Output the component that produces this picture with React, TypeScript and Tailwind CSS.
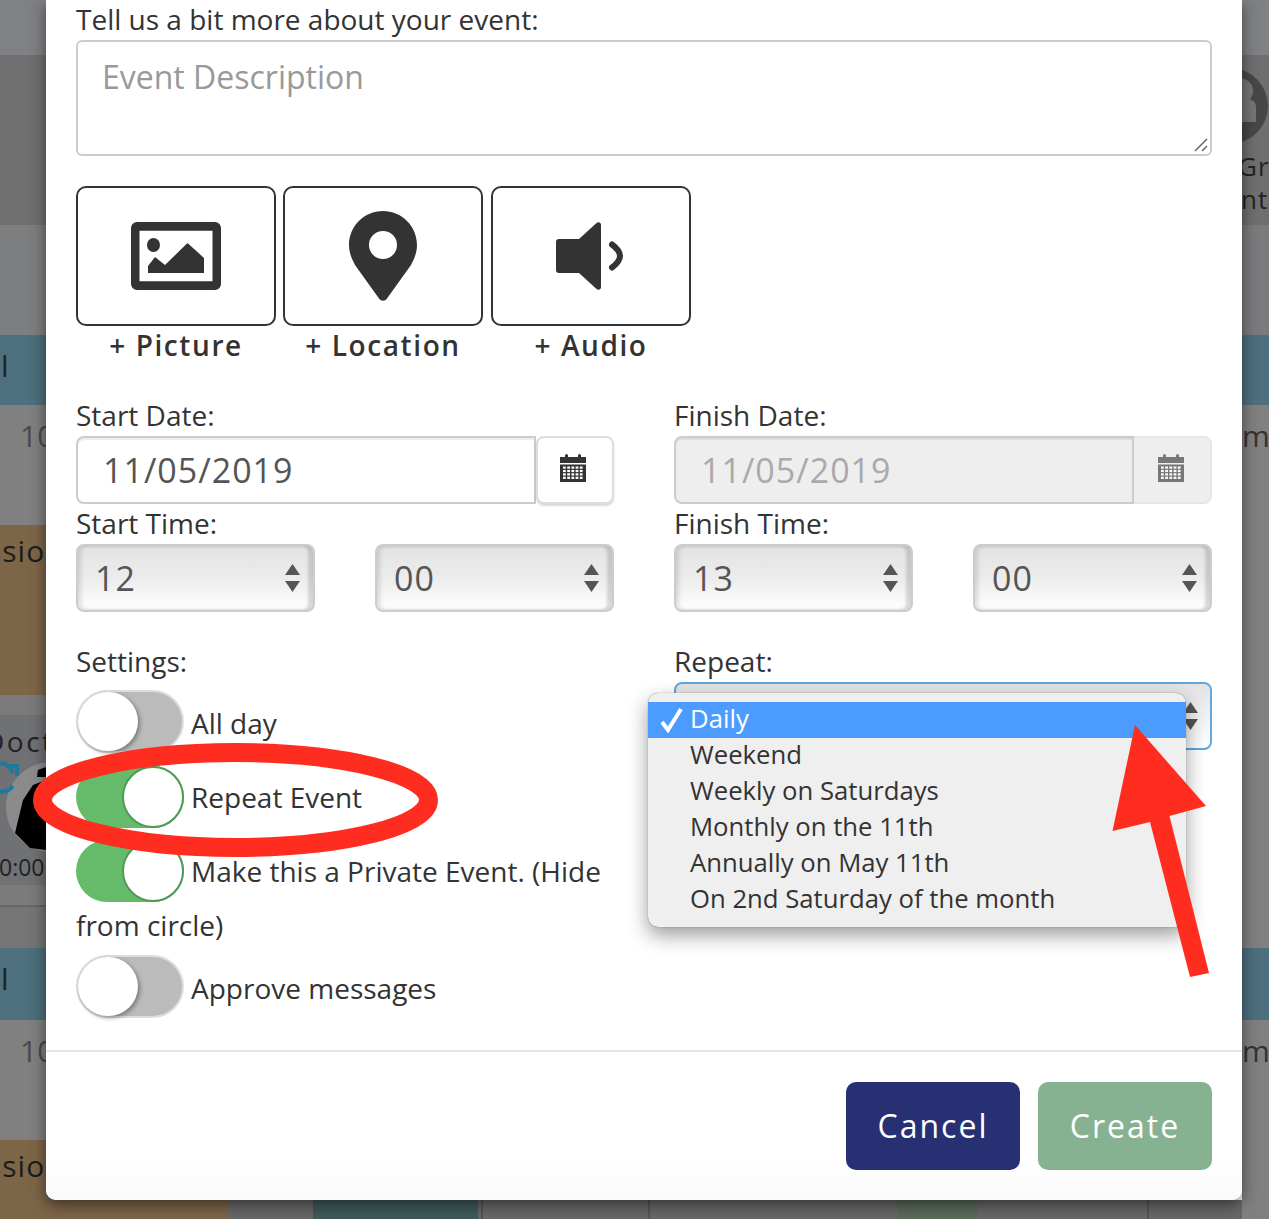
import type { ReactNode } from "react";

const REPEAT_OPTIONS = [
  "Daily",
  "Weekend",
  "Weekly on Saturdays",
  "Monthly on the 11th",
  "Annually on May 11th",
  "On 2nd Saturday of the month",
];

function PictureIcon() {
  return (
    <svg width="90" height="68" viewBox="0 0 90 68" fill="#333">
      <path
        fillRule="evenodd"
        d="M6 0H84A6 6 0 0 1 90 6V62A6 6 0 0 1 84 68H6A6 6 0 0 1 0 62V6A6 6 0 0 1 6 0ZM8.5 8.7V59.3H81.5V8.7Z"
      />
      <ellipse cx="22.5" cy="23" rx="6.5" ry="7" />
      <path d="M17 51V44L24 35L34 43L56.5 21L73 36V51Z" />
    </svg>
  );
}

function PinIcon() {
  return (
    <svg width="68" height="90" viewBox="0 0 68 90" fill="#333">
      <path
        fillRule="evenodd"
        d="M34 0C52.8 0 68 15.2 68 34c0 8-3 14-6 20L38 87.5c-2 3-6 3-8 0L6 54c-3-6-6-12-6-20C0 15.2 15.2 0 34 0ZM34 20a14 14 0 1 0 0 28a14 14 0 1 0 0-28Z"
      />
    </svg>
  );
}

function AudioIcon() {
  return (
    <svg className="mr-[2px]" width="68" height="68" viewBox="0 0 68 68" fill="#333">
      <path d="M3 17H23L40 1.5C42-.5 45 0 45 3V65C45 68 42 68.5 40 66.5L23 51H3C1 51 0 50 0 48V20C0 18 1 17 3 17Z" />
      <path
        d="M56 22.5c4 3 8 7 8 11.5s-4 8.5-8 11.5"
        fill="none"
        stroke="#333"
        strokeWidth="6"
        strokeLinecap="round"
      />
    </svg>
  );
}

function CalendarIcon({ color }: { color: string }) {
  const dots: ReactNode[] = [];
  for (let row = 0; row < 4; row++) {
    for (let col = 0; col < 5; col++) {
      dots.push(
        <rect
          key={`${row}-${col}`}
          x={3 + col * 4.2}
          y={12.5 + row * 3.4}
          width="2.8"
          height="2.2"
          fill="#fff"
        />,
      );
    }
  }
  return (
    <svg width="26" height="28" viewBox="0 0 26 28" fill={color}>
      <path d="M0 3H5V1.5A1.5 1.5 0 0 1 8 1.5V3H18V1.5A1.5 1.5 0 0 1 21 1.5V3H26V9H0Z" />
      <rect x="0" y="10.5" width="26" height="17.5" />
      {dots}
    </svg>
  );
}

function SelectArrows() {
  return (
    <svg width="15" height="28" viewBox="0 0 15 28" fill="#555">
      <path d="M7.5 0L15 11H0Z" />
      <path d="M7.5 28L15 17H0Z" />
    </svg>
  );
}

function TimeSelect({ value }: { value: string }) {
  return (
    <div className="flex h-[68px] items-center justify-between rounded-[8px] border-2 border-[#ccc] bg-gradient-to-b from-[#e3e3e3] via-[#ececec] to-white pl-[17px] pr-[13px] text-[34px] tracking-[1px] text-[#555] shadow-[inset_3px_0_4px_rgba(0,0,0,0.12),inset_-5px_0_3px_rgba(0,0,0,0.14)]">
      <span>{value}</span>
      <SelectArrows />
    </div>
  );
}

function DateInput({ disabled }: { disabled?: boolean }) {
  return (
    <div className="flex h-[68px]">
      <div
        className={
          disabled
            ? "flex flex-1 items-center rounded-l-[8px] border-2 border-[#ccc] bg-[#eee] pl-[25px] text-[34px] tracking-[1px] text-[#aaa] shadow-[inset_0_2px_1px_rgba(0,0,0,0.08)]"
            : "flex flex-1 items-center rounded-l-[8px] border-2 border-[#ccc] bg-white pl-[25px] text-[34px] tracking-[1px] text-[#555] shadow-[inset_0_2px_1px_rgba(0,0,0,0.08)]"
        }
      >
        11/05/2019
      </div>
      <div
        className={
          disabled
            ? "flex w-[78px] items-center justify-center rounded-r-[8px] border-2 border-l-0 border-[#e6e6e6] bg-[#eee] pb-[5px] pr-[3px]"
            : "flex w-[78px] items-center justify-center rounded-[8px] border-2 border-[#ddd] bg-white pb-[5px] pr-[5px] shadow-[0_2px_2px_rgba(0,0,0,0.15)]"
        }
      >
        <CalendarIcon color={disabled ? "#777" : "#333"} />
      </div>
    </div>
  );
}

function Toggle({ on }: { on?: boolean }) {
  return (
    <div
      className={
        on
          ? "flex h-[62px] w-[108px] shrink-0 justify-end rounded-full bg-[#66bb6a]"
          : "flex h-[63px] w-[108px] shrink-0 justify-start rounded-full border-2 border-[#ddd] bg-[#bbb]"
      }
    >
      <div
        className={
          on
            ? "h-[62px] w-[62px] rounded-full border-2 border-[#4f9a55] bg-white"
            : "h-[59px] w-[60px] rounded-full bg-white shadow-[2px_2px_4px_rgba(0,0,0,0.35)]"
        }
      />
    </div>
  );
}

function SettingRow({
  on,
  label,
  className,
}: {
  on?: boolean;
  label: string;
  className?: string;
}) {
  return (
    <div className={`flex items-center gap-[7px] ${className ?? ""}`}>
      <Toggle on={on} />
      <span className={on ? "" : "pt-[3px]"}>{label}</span>
    </div>
  );
}

function AttachButton({
  label,
  className,
  children,
}: {
  label: string;
  className?: string;
  children: ReactNode;
}) {
  return (
    <div className={`w-[200px] ${className ?? ""}`}>
      <div className="flex h-[140px] items-center justify-center rounded-[10px] border-2 border-[#333]">
        {children}
      </div>
      <div className="flex h-[40px] items-center justify-center pb-[2px] font-semibold tracking-[1.6px]">
        {label}
      </div>
    </div>
  );
}

function FieldLabel({ children }: { children: ReactNode }) {
  return <div className="flex h-[40px] items-center pb-[2px]">{children}</div>;
}

function DoctorCell() {
  return (
    <div className="relative h-[170px] overflow-hidden bg-[#6f7174]">
      <span className="-ml-[16px] mt-[5px] block text-[28px] tracking-[2.5px] text-[#222]">Doct</span>
      <div className="absolute left-[6px] top-[47px] h-[90px] w-[90px] rounded-full bg-[#8b8b8b]" />
      <svg className="absolute left-0 top-0" width="60" height="140" viewBox="0 0 60 140">
        <path d="M23 85L15 118L30 133L46 135V65L33 70Z" fill="#000" />
        <path d="M38 55L46 52V62H37Z" fill="#000" />
        <g fill="none" stroke="#1b7a9e" strokeWidth="4">
          <path d="M-2 49C4 47 10 50 13 58" />
          <path d="M-2 76C4 78 9 76 13 71" />
          <path d="M6 51H17V61" />
        </g>
      </svg>
      <span className="absolute -left-[1px] top-[135px] text-[23px] text-[#222]">0:00</span>
    </div>
  );
}

function Backdrop() {
  return (
    <div className="flex h-[1219px] w-full text-[30px] text-[#333]">
      <div className="flex w-[228px] shrink-0 flex-col">
        <div className="h-[55px] bg-[#7f8184]" />
        <div className="h-[170px] bg-[#707070]" />
        <div className="h-[110px] bg-[#7d7e80]" />
        <div className="h-[70px] bg-[#4e6f7d] pt-[8px] text-[#222]">
          <span className="-ml-[17px] block">ol</span>
        </div>
        <div className="h-[120px] bg-[#808080] pl-[20px] pt-[8px] text-[#4a4a4a]">10</div>
        <div className="h-[170px] bg-[#7d6548] pt-[3px] tracking-[1px] text-[#1c1c1c]">
          <span className="-ml-[13px] block">ssio</span>
        </div>
        <div className="h-[20px] bg-[#7a7a7a]" />
        <DoctorCell />
        <div className="h-[20px] bg-[#7b7b7b]" />
        <div className="h-[43px] border-t-2 border-[#666] bg-[#757575]" />
        <div className="h-[72px] bg-[#4e6f7d] pt-[8px] text-[#222]">
          <span className="-ml-[17px] block">ol</span>
        </div>
        <div className="h-[120px] bg-[#808080] pl-[20px] pt-[8px] text-[#4a4a4a]">10</div>
        <div className="flex-1 bg-[#7d6548] pt-[3px] tracking-[1px] text-[#1c1c1c]">
          <span className="-ml-[13px] block">ssio</span>
        </div>
      </div>
      <div className="flex flex-1 flex-col justify-end">
        <div className="flex h-[19px] bg-[#686868]">
          <div className="w-[85px]" />
          <div className="w-[165px] bg-[#3f5a5c]" />
          <div className="w-[3px]" />
          <div className="w-[167px] border-l-[2px] border-[#555]" />
          <div className="w-[166px] border-l-[2px] border-[#555]" />
          <div className="w-[83px]" />
          <div className="w-[80px] bg-[#5c6a5a]" />
          <div className="w-[170px]" />
          <div className="flex-1 border-l-[2px] border-[#555]" />
        </div>
      </div>
      <div className="flex w-[27px] shrink-0 flex-col">
        <div className="h-[55px] bg-[#7f8184]" />
        <div className="relative h-[170px] overflow-hidden bg-[#6f6f6f] pt-[95px] text-[26px] leading-[33px] tracking-[1px] text-[#222]">
          <div className="absolute -left-[50px] top-[13px] h-[76px] w-[76px] rounded-full bg-[#474747]" />
          <div className="absolute -left-[15px] top-[23px] h-[26px] w-[26px] rounded-full bg-[#757575]" />
          <div className="absolute -left-[15px] top-[44px] h-[23px] w-[29px] rounded-t-[8px] bg-[#757575]" />
          <div className="relative -ml-[4px]">Gre</div>
          <div className="relative -ml-[1px]">nt</div>
        </div>
        <div className="h-[110px] bg-[#7a7b7d]" />
        <div className="h-[70px] bg-[#4e6f7d]" />
        <div className="h-[543px] bg-[#808080] pt-[8px] text-[#333]">m</div>
        <div className="h-[72px] bg-[#4e6f7d]" />
        <div className="flex-1 bg-[#808080] pt-[8px] text-[#333]">m</div>
      </div>
    </div>
  );
}

function RepeatMenu() {
  return (
    <div className="absolute -left-[26px] top-[11px] z-10 w-[538px] rounded-[10px] bg-[#efefef] py-[9px] text-[25.7px] leading-[36px] text-[#333] shadow-[0_8px_20px_rgba(0,0,0,0.4),0_0_1px_rgba(0,0,0,0.6)]">
      {REPEAT_OPTIONS.map((option, i) => (
        <div
          key={option}
          className={
            i === 0
              ? "flex h-[36px] items-center bg-[#4c9bff] pb-[2px] pl-[42px] text-white"
              : "flex h-[36px] items-center pb-[2px] pl-[42px]"
          }
        >
          {option}
        </div>
      ))}
      <svg
        className="absolute left-[12px] top-[14px]"
        width="24"
        height="26"
        viewBox="0 0 24 26"
        fill="none"
        stroke="#fff"
        strokeWidth="4"
      >
        <path d="M2 15L8 23L21 2" />
      </svg>
    </div>
  );
}

export default function App() {
  return (
    <div className="relative h-[1219px] w-full overflow-hidden font-['Open_Sans',sans-serif] text-[28px] text-[#333]">
      <Backdrop />

      <div className="absolute left-[46px] top-0 w-[1196px] rounded-b-[10px] bg-white shadow-[0_5px_15px_rgba(0,0,0,0.5)]">
        <div className="px-[30px]">
          <FieldLabel>Tell us a bit more about your event:</FieldLabel>
          <div className="relative h-[116px] rounded-[6px] border-2 border-[#ccc] pl-[24px] pt-[11px] text-[32px] text-[#999]">
            Event Description
            <svg
              className="absolute bottom-[1px] right-[1px]"
              width="16"
              height="16"
              viewBox="0 0 16 16"
              stroke="#666"
              strokeWidth="1.5"
            >
              <path d="M2 14L14 2M9 14L14 9" />
            </svg>
          </div>

          <div className="mt-[30px] flex gap-[7px]">
            <AttachButton label="+ Picture">
              <PictureIcon />
            </AttachButton>
            <AttachButton label="+ Location">
              <PinIcon />
            </AttachButton>
            <AttachButton label="+ Audio" className="ml-[1px]">
              <AudioIcon />
            </AttachButton>
          </div>

          <div className="mt-[30px] grid grid-cols-[538px_538px] gap-x-[60px]">
            <div>
              <FieldLabel>Start Date:</FieldLabel>
              <DateInput />
              <FieldLabel>Start Time:</FieldLabel>
              <div className="grid grid-cols-[239px_239px] gap-x-[60px]">
                <TimeSelect value="12" />
                <TimeSelect value="00" />
              </div>
              <div className="mt-[30px]">
                <FieldLabel>Settings:</FieldLabel>
                <SettingRow label="All day" className="mt-[8px]" />
                <SettingRow on label="Repeat Event" className="mt-[13px]" />
                <SettingRow on label="Make this a Private Event. (Hide" className="mt-[12px]" />
                <div className="flex h-[48px] items-center pb-[2px]">from circle)</div>
                <SettingRow label="Approve messages" className="mt-[5px]" />
              </div>
            </div>
            <div>
              <FieldLabel>Finish Date:</FieldLabel>
              <DateInput disabled />
              <FieldLabel>Finish Time:</FieldLabel>
              <div className="grid grid-cols-[239px_239px] gap-x-[60px]">
                <TimeSelect value="13" />
                <TimeSelect value="00" />
              </div>
              <div className="mt-[30px]">
                <FieldLabel>Repeat:</FieldLabel>
                <div className="relative">
                  <div className="flex h-[68px] items-center justify-end rounded-[8px] border-2 border-[#5fa8e0] bg-gradient-to-b from-[#e3e3e3] to-white pr-[12px]">
                    <SelectArrows />
                  </div>
                  <RepeatMenu />
                </div>
              </div>
            </div>
          </div>
        </div>

        <div className="mt-[32px] flex justify-end gap-[18px] rounded-b-[10px] border-t-2 border-[#e5e5e5] bg-gradient-to-b from-white from-70% to-[#fafafa] px-[30px] py-[30px]">
          <div className="flex h-[88px] w-[174px] items-center justify-center rounded-[10px] bg-[#283074] text-[32px] tracking-[2px] text-white">
            Cancel
          </div>
          <div className="flex h-[88px] w-[174px] items-center justify-center rounded-[10px] bg-[#87b292] text-[32px] tracking-[2px] text-white">
            Create
          </div>
        </div>
      </div>

      {/* red annotations on top of the screenshot */}
      <svg className="absolute left-0 top-[700px] z-20" width="1269" height="300" viewBox="0 700 1269 300">
        <ellipse cx="235.5" cy="800" rx="193" ry="47.5" fill="none" stroke="#fe2d20" strokeWidth="19" />
        <path
          d="M1135 725L1206 806L1169.5 816L1209 973L1190 977L1150 822L1112.5 831Z"
          fill="#fe2d20"
        />
      </svg>
    </div>
  );
}
